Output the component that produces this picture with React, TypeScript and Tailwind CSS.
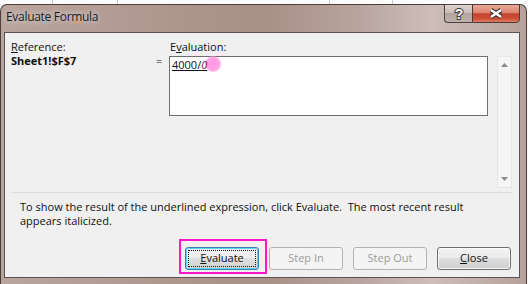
import React from 'react';

function HelpGlyph() {
  return (
    <svg width="14" height="14" viewBox="0 0 14 14">
      <text
        x="7"
        y="12"
        textAnchor="middle"
        fontFamily="'Liberation Sans', Arial, sans-serif"
        fontWeight="700"
        fontSize="14"
        fill="#ffffff"
        stroke="#3b3b3b"
        strokeWidth="2"
        paintOrder="stroke"
      >
        ?
      </text>
    </svg>
  );
}

function CloseGlyph() {
  return (
    <svg width="16" height="11" viewBox="0 0 16 11">
      <path d="M3 2 L13 9 M13 2 L3 9" stroke="#3a3030" strokeWidth="4.6" />
      <path d="M3 2 L13 9 M13 2 L3 9" stroke="#ffffff" strokeWidth="2.6" />
    </svg>
  );
}

function Arrow({ up }: { up?: boolean }) {
  return (
    <svg width="7" height="4" viewBox="0 0 7 4">
      <path d={up ? 'M0 4 L3.5 0 L7 4 Z' : 'M0 0 L7 0 L3.5 4 Z'} fill="#8c8c8c" />
    </svg>
  );
}

function DialogButton({
  children,
  disabled = false,
  focused = false,
}: {
  children: React.ReactNode;
  disabled?: boolean;
  focused?: boolean;
}) {
  if (disabled) {
    return (
      <div className="w-[74px] h-[23px] rounded-[3px] border border-[#adb2b5] bg-[#f4f4f4] flex items-center justify-center text-[#9c9c9c]">
        {children}
      </div>
    );
  }
  if (focused) {
    return (
      <div className="w-[74px] h-[23px] rounded-[3px] border border-[#3c7fb1] shadow-[inset_0_0_0_1px_#5fd2f7] bg-[linear-gradient(to_bottom,#f4f4f4_0%,#ececec_50%,#dfdfdf_50%,#d2d2d2_100%)] p-[2px] flex">
        <div className="flex-1 border border-dotted border-[#1a1a1a] flex items-center justify-center">
          {children}
        </div>
      </div>
    );
  }
  return (
    <div className="w-[74px] h-[23px] rounded-[3px] border border-[#707070] shadow-[inset_0_0_0_1px_rgba(255,255,255,0.75)] bg-[linear-gradient(to_bottom,#f2f2f2_0%,#ebebeb_50%,#dddddd_50%,#cfcfcf_100%)] flex items-center justify-center">
      {children}
    </div>
  );
}

export default function App() {
  return (
    <div className="relative w-[528px] h-[284px] overflow-hidden bg-[#fbfbfb] flex flex-col font-['Open_Sans','Noto_Sans',sans-serif] text-[11px] text-[#111]">
      {/* excel grid behind the dialog */}
      <div className="h-[4px] shrink-0 flex">
        <div className="w-[53px] border-r border-[#c9cdd3]" />
        <div className="w-[65px] border-r border-[#c9cdd3]" />
        <div className="w-[212px] border-r border-[#c9cdd3]" />
        <div className="w-[63px] border-r border-[#c9cdd3]" />
      </div>

      {/* window */}
      <div className="flex-1 w-[527px] flex flex-col rounded-t-[7px] border-t border-l border-r border-[#4b3e3a] bg-[linear-gradient(to_right,#b9a59e_0%,#ad958d_35%,#a88f87_50%,#b8a49e_68%,#cdbeb9_82%,#b6a19a_100%)]">
        {/* title bar */}
        <div className="h-[27px] shrink-0 flex justify-between">
          <div className="pl-[5px] pt-[4px] text-[12px] leading-[16px] tracking-[-0.3px] text-[#1b1b1b] [text-shadow:0_0_6px_rgba(255,255,255,0.85)]">
            Evaluate Formula
          </div>
          <div className="mr-[6px] -mt-[1px] h-[19px] flex">
            <div className="w-[28px] h-full rounded-bl-[4px] border border-r-0 border-[#4e423e] bg-[linear-gradient(to_bottom,#ddd3d0_0%,#c9bdb9_45%,#b2a5a1_50%,#bdb1ad_100%)] flex items-center justify-center">
              <HelpGlyph />
            </div>
            <div className="w-[48px] h-full rounded-br-[4px] border border-[#4e3a35] bg-[linear-gradient(to_bottom,#eaa898_0%,#dc8672_45%,#c4442d_52%,#cc4f37_80%,#e07d65_100%)] flex items-center justify-center">
              <CloseGlyph />
            </div>
          </div>
        </div>

        {/* client area */}
        <div className="ml-[3px] w-[516px] h-[246px] shrink-0 border border-[#5e524e] bg-[#f0f0f0] flex flex-col">
          <div className="flex pt-[7px] pl-[6px]">
            <div className="w-[145px]">
              <div className="leading-[14px]">
                <span className="underline">R</span>eference:
              </div>
              <div className="leading-[14px] font-bold">Sheet1!$F$7</div>
            </div>
            <div className="w-[13px] pt-[14px] leading-[14px]">=</div>
            <div className="w-[319px]">
              <div className="leading-[14px] pl-[1px]">
                E<span className="underline">v</span>aluation:
              </div>
              <div className="mt-[2px] h-[60px] border border-[#6f6f6f] bg-white pl-[2px] pt-[1px] leading-[13px]">
                <span className="underline">
                  4000/<span className="relative z-10 italic text-[#7a1052]">0</span>
                </span>
              </div>
            </div>
            <div className="ml-[9px] mt-[16px] w-[15px] h-[132px] border border-[#e6e6e6] bg-[#f5f5f5] flex flex-col justify-between">
              <div className="h-[16px] flex items-center justify-center">
                <Arrow up />
              </div>
              <div className="h-[16px] flex items-center justify-center">
                <Arrow />
              </div>
            </div>
          </div>

          <div className="mt-[4px] mx-[6px] h-px bg-[#d5dfe5]" />

          <div className="mt-[7px] pl-[15px] leading-[14px] whitespace-pre">
            <div>To show the result of the underlined expression, click Evaluate.  The most recent result</div>
            <div>appears italicized.</div>
          </div>

          <div className="mt-[19px] pr-[8px] flex justify-end gap-[10px]">
            <DialogButton focused>
              <span>
                <span className="underline">E</span>valuate
              </span>
            </DialogButton>
            <DialogButton disabled>Step In</DialogButton>
            <DialogButton disabled>Step Out</DialogButton>
            <DialogButton>
              <span>
                <span className="underline">C</span>lose
              </span>
            </DialogButton>
          </div>
        </div>
      </div>

      {/* annotation overlays */}
      <div className="absolute left-[205px] top-[56px] w-[16px] h-[16px] rounded-full bg-[radial-gradient(circle,#ff7ad9_0%,#ff8fdf_55%,rgba(255,160,230,0)_100%)] opacity-80" />
      <div className="absolute left-[179px] top-[239px] w-[88px] h-[35px] border-2 border-[#ff16cc]" />
    </div>
  );
}
